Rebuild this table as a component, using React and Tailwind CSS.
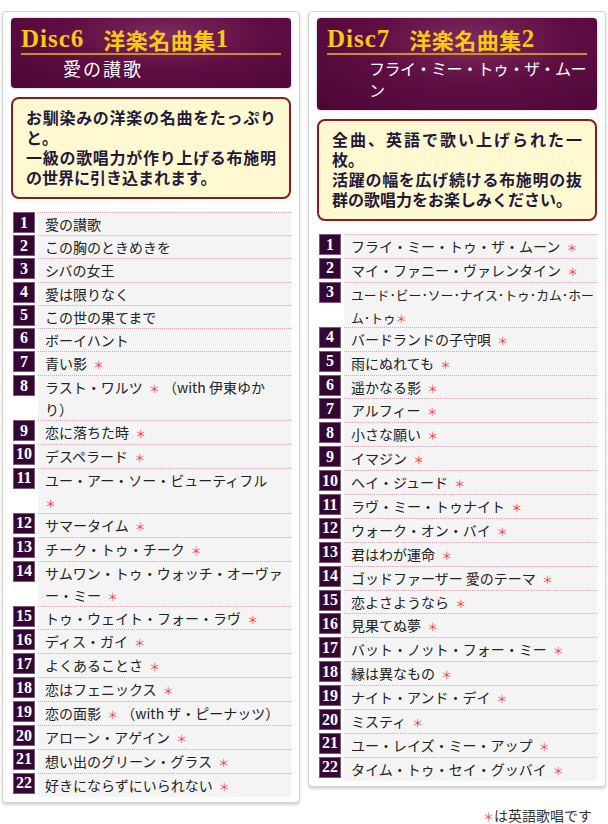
import React from 'react';

const Star = ({ tight }) => (
  <span className={`${tight ? '' : 'ml-[3px]'} text-[11px] leading-none text-[#ff3c3c]`}>＊</span>
);

// h: 'a' = plain row, 'b' = row with the red mark, 'c' = two-line row
const disc6 = [
  { t: '愛の讃歌', h: 'a' },
  { t: 'この胸のときめきを', h: 'a' },
  { t: 'シバの女王', h: 'a' },
  { t: '愛は限りなく', h: 'a' },
  { t: 'この世の果てまで', h: 'a' },
  { t: 'ボーイハント', h: 'a' },
  { t: <>青い影 <Star /></>, h: 'b' },
  { t: <>ラスト・ワルツ <Star /> （with 伊東ゆか<br />り）</>, h: 'c' },
  { t: <>恋に落ちた時 <Star /></>, h: 'b' },
  { t: <>デスペラード <Star /></>, h: 'b' },
  { t: <>ユー・アー・ソー・ビューティフル<br /><Star tight /></>, h: 'c' },
  { t: <>サマータイム <Star /></>, h: 'b' },
  { t: <>チーク・トゥ・チーク <Star /></>, h: 'b' },
  { t: <>サムワン・トゥ・ウォッチ・オーヴァ<br />ー・ミー <Star /></>, h: 'c' },
  { t: <>トゥ・ウェイト・フォー・ラヴ <Star /></>, h: 'b' },
  { t: <>ディス・ガイ <Star /></>, h: 'b' },
  { t: <>よくあることさ <Star /></>, h: 'b' },
  { t: <>恋はフェニックス <Star /></>, h: 'b' },
  { t: <>恋の面影 <Star /> （with ザ・ピーナッツ）</>, h: 'b' },
  { t: <>アローン・アゲイン <Star /></>, h: 'b' },
  { t: <>想い出のグリーン・グラス <Star /></>, h: 'b' },
  { t: <>好きにならずにいられない <Star /></>, h: 'b' },
];

const disc7 = [
  { t: <>フライ・ミー・トゥ・ザ・ムーン <Star /></>, h: 'b' },
  { t: <>マイ・ファニー・ヴァレンタイン <Star /></>, h: 'b' },
  {
    t: (
      <span className="text-[12.8px]">
        ユード･ビー･ソー･ナイス･トゥ･カム･ホー<br />ム･トゥ<Star tight />
      </span>
    ),
    h: 'c',
  },
  { t: <>バードランドの子守唄 <Star /></>, h: 'b' },
  { t: <>雨にぬれても <Star /></>, h: 'b' },
  { t: <>遥かなる影 <Star /></>, h: 'b' },
  { t: <>アルフィー <Star /></>, h: 'b' },
  { t: <>小さな願い <Star /></>, h: 'b' },
  { t: <>イマジン <Star /></>, h: 'b' },
  { t: <>ヘイ・ジュード <Star /></>, h: 'b' },
  { t: <>ラヴ・ミー・トゥナイト <Star /></>, h: 'b' },
  { t: <>ウォーク・オン・バイ <Star /></>, h: 'b' },
  { t: <>君はわが運命 <Star /></>, h: 'b' },
  { t: <>ゴッドファーザー 愛のテーマ <Star /></>, h: 'b' },
  { t: <>恋よさようなら <Star /></>, h: 'b' },
  { t: <>見果てぬ夢 <Star /></>, h: 'b' },
  { t: <>バット・ノット・フォー・ミー <Star /></>, h: 'b' },
  { t: <>縁は異なもの <Star /></>, h: 'b' },
  { t: <>ナイト・アンド・デイ <Star /></>, h: 'b' },
  { t: <>ミスティ <Star /></>, h: 'b' },
  { t: <>ユー・レイズ・ミー・アップ <Star /></>, h: 'b' },
  { t: <>タイム・トゥ・セイ・グッバイ <Star /></>, h: 'b' },
];

const rowHeight = {
  a: 'h-[23.2px] leading-[22.2px]',
  b: 'h-[23.9px] leading-[22.9px]',
  c: 'h-[45px] leading-[22px]',
};

const TrackRow = ({ n, track }) => (
  <div className="flex items-start gap-[3px]">
    <div className="flex h-[21px] w-[22px] shrink-0 items-center justify-center border border-[#7a5a78] bg-[#330634] font-['Liberation_Serif',serif] text-[16px] font-bold leading-none text-white">
      {n}
    </div>
    <div
      className={`flex-1 overflow-hidden border-t border-dotted border-[#d7a6b4] bg-[#f4f4f4] pl-[7px] text-[14px] text-[#222] whitespace-nowrap ${rowHeight[track.h]}`}
    >
      {track.t}
    </div>
  </div>
);

const DiscCard = ({ no, series, digit, subtitle, subHeight, blurb, tracks }) => (
  <div className="rounded-[4px] border border-[#d4d4d4] bg-white px-[8px] pt-[6px] pb-[5px] shadow-[0_2px_3px_rgba(0,0,0,0.18)]">
    {/* Header */}
    <div className="rounded-[4px] bg-[radial-gradient(ellipse_at_55%_25%,#7e2a5e_0%,#5f0e43_45%,#4c0636_100%)] px-[10px] pt-[7px] pb-[7px] shadow-[0_0_2px_rgba(0,0,0,0.45)]">
      <div className="flex h-[30px] items-center whitespace-nowrap border-b-2 border-[#c8921e] font-bold leading-[28px] text-[#f8c814]">
        <span className="font-['Liberation_Serif',serif] text-[25px] tracking-[1px]">{no}</span>
        <span className="ml-[19px] font-['Noto_Sans_CJK_JP',sans-serif] text-[22px] tracking-[0.5px]">
          {series}
        </span>
        <span className="font-['Liberation_Serif',serif] text-[25px]">{digit}</span>
      </div>
      <div
        className={`mt-[4px] overflow-hidden pl-[42px] font-['Liberation_Serif','Noto_Sans_CJK_JP',serif] leading-[22px] text-white ${subHeight}`}
      >
        {subtitle}
      </div>
    </div>

    {/* Blurb */}
    <div className="mt-[9px] rounded-[8px] border-2 border-[#8e1b1b] bg-[#fff9d1] px-[13px] pt-[8px] pb-[10px] text-justify text-[16px] font-bold leading-[20px] text-[#1f1a3a]">
      {blurb}
    </div>

    {/* Tracks */}
    <div className="mt-[13px] pl-[2px]">
      {tracks.map((track, i) => (
        <TrackRow key={i} n={i + 1} track={track} />
      ))}
    </div>
  </div>
);

export default function App() {
  return (
    <div className="min-h-[824px] w-[608px] bg-white px-[2px] pt-[11px] font-['Noto_Sans_CJK_JP',sans-serif]">
      <div className="grid grid-cols-2 items-start gap-[8px]">
        <DiscCard
          no="Disc6"
          series="洋楽名曲集"
          digit="1"
          subHeight="h-[22px]"
          subtitle={<span className="text-[18px] tracking-[2px]">愛の讃歌</span>}
          blurb={
            <>
              お馴染みの洋楽の名曲をたっぷりと。
              <br />
              一級の歌唱力が作り上げる布施明の世界に引き込まれます。
            </>
          }
          tracks={disc6}
        />
        <DiscCard
          no="Disc7"
          series="洋楽名曲集"
          digit="2"
          subHeight="h-[44px]"
          subtitle={
            <span className="text-[16px] tracking-[-0.5px]">
              <span className="whitespace-nowrap">フライ・ミー・トゥ・ザ・ムー</span>
              <br />ン
            </span>
          }
          blurb={
            <>
              全曲、英語で歌い上げられた一枚。
              <br />
              活躍の幅を広げ続ける布施明の抜群の歌唱力をお楽しみください。
            </>
          }
          tracks={disc7}
        />
      </div>
      <div className="mt-[2px] pr-[14px] text-right text-[14px] leading-[20px] text-[#333]">
        <span className="text-[11px] text-[#ff3c3c]">＊</span>は英語歌唱です
      </div>
    </div>
  );
}
